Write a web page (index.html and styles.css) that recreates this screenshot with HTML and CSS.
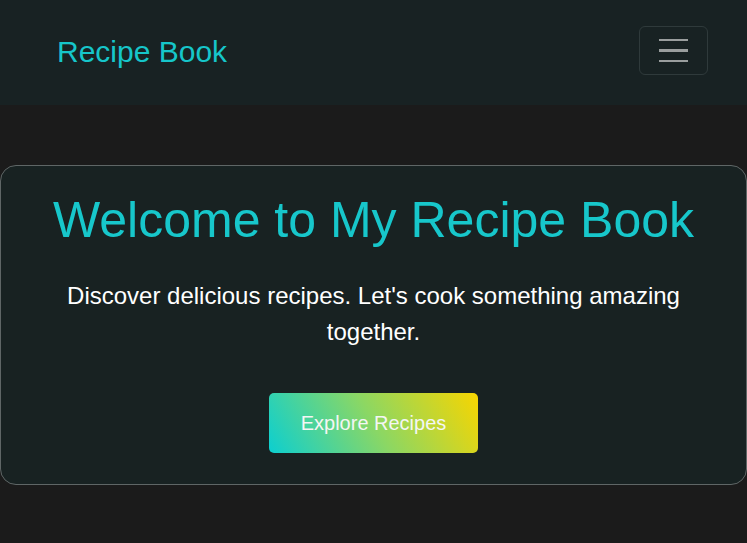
FILE: index.html
```html
<!DOCTYPE html>
<html lang="en">
<head>
<meta charset="utf-8">
<title>Recipe Book</title>
<link rel="stylesheet" href="styles.css">
</head>
<body>
  <nav class="navbar">
    <a class="brand" href="#">Recipe Book</a>
    <button class="toggler" type="button" aria-label="Toggle navigation">
      <span class="bar"></span>
      <span class="bar"></span>
      <span class="bar"></span>
    </button>
  </nav>
  <main class="main">
    <section class="hero">
      <h1 class="hero-title">Welcome to My Recipe Book</h1>
      <p class="hero-text">Discover delicious recipes. Let's cook something amazing together.</p>
      <a class="hero-btn" href="#">Explore Recipes</a>
    </section>
  </main>
</body>
</html>
```
FILE: styles.css
```css
* { box-sizing: border-box; }
html, body { margin: 0; padding: 0; }
body {
  background: #1b1b1b;
  font-family: "Liberation Sans", Arial, sans-serif;
  color: #ffffff;
  min-height: 543px;
}
.navbar {
  height: 105px;
  background: #182223;
  display: flex;
  align-items: center;
  justify-content: space-between;
  padding: 0 39px 0 57px;
}
.brand {
  color: #16c6ca;
  font-size: 30px;
  text-decoration: none;
  line-height: 1.2;
  margin-top: -2px;
}
.toggler {
  width: 69px;
  height: 49px;
  background: transparent;
  border: 1px solid #2f3a3b;
  border-radius: 6px;
  display: flex;
  flex-direction: column;
  align-items: center;
  justify-content: center;
  gap: 8px;
  padding: 0;
  margin-top: -4px;
}
.toggler .bar {
  display: block;
  width: 29px;
  height: 2.5px;
  background: #9a9e9e;
}
.main {
  padding-top: 60px;
}
.hero {
  background: #182222;
  border: 1px solid #5f6666;
  border-radius: 16px;
  padding: 24px 48px 31px;
  text-align: center;
  display: flex;
  flex-direction: column;
  align-items: center;
}
.hero-title {
  margin: 0 0 28px;
  font-size: 50px;
  font-weight: normal;
  line-height: 1.2;
  color: #17c7cb;
}
.hero-text {
  margin: 0 0 43px;
  font-size: 24px;
  line-height: 1.5;
  color: #ffffff;
}
.hero-btn {
  display: inline-block;
  padding: 15px 32px;
  font-size: 20px;
  line-height: 1.5;
  color: #f4f6f4;
  text-decoration: none;
  border-radius: 5px;
  background: linear-gradient(60deg, #0ccfd0 0%, #8bd764 50%, #f8d500 100%);
}
```
